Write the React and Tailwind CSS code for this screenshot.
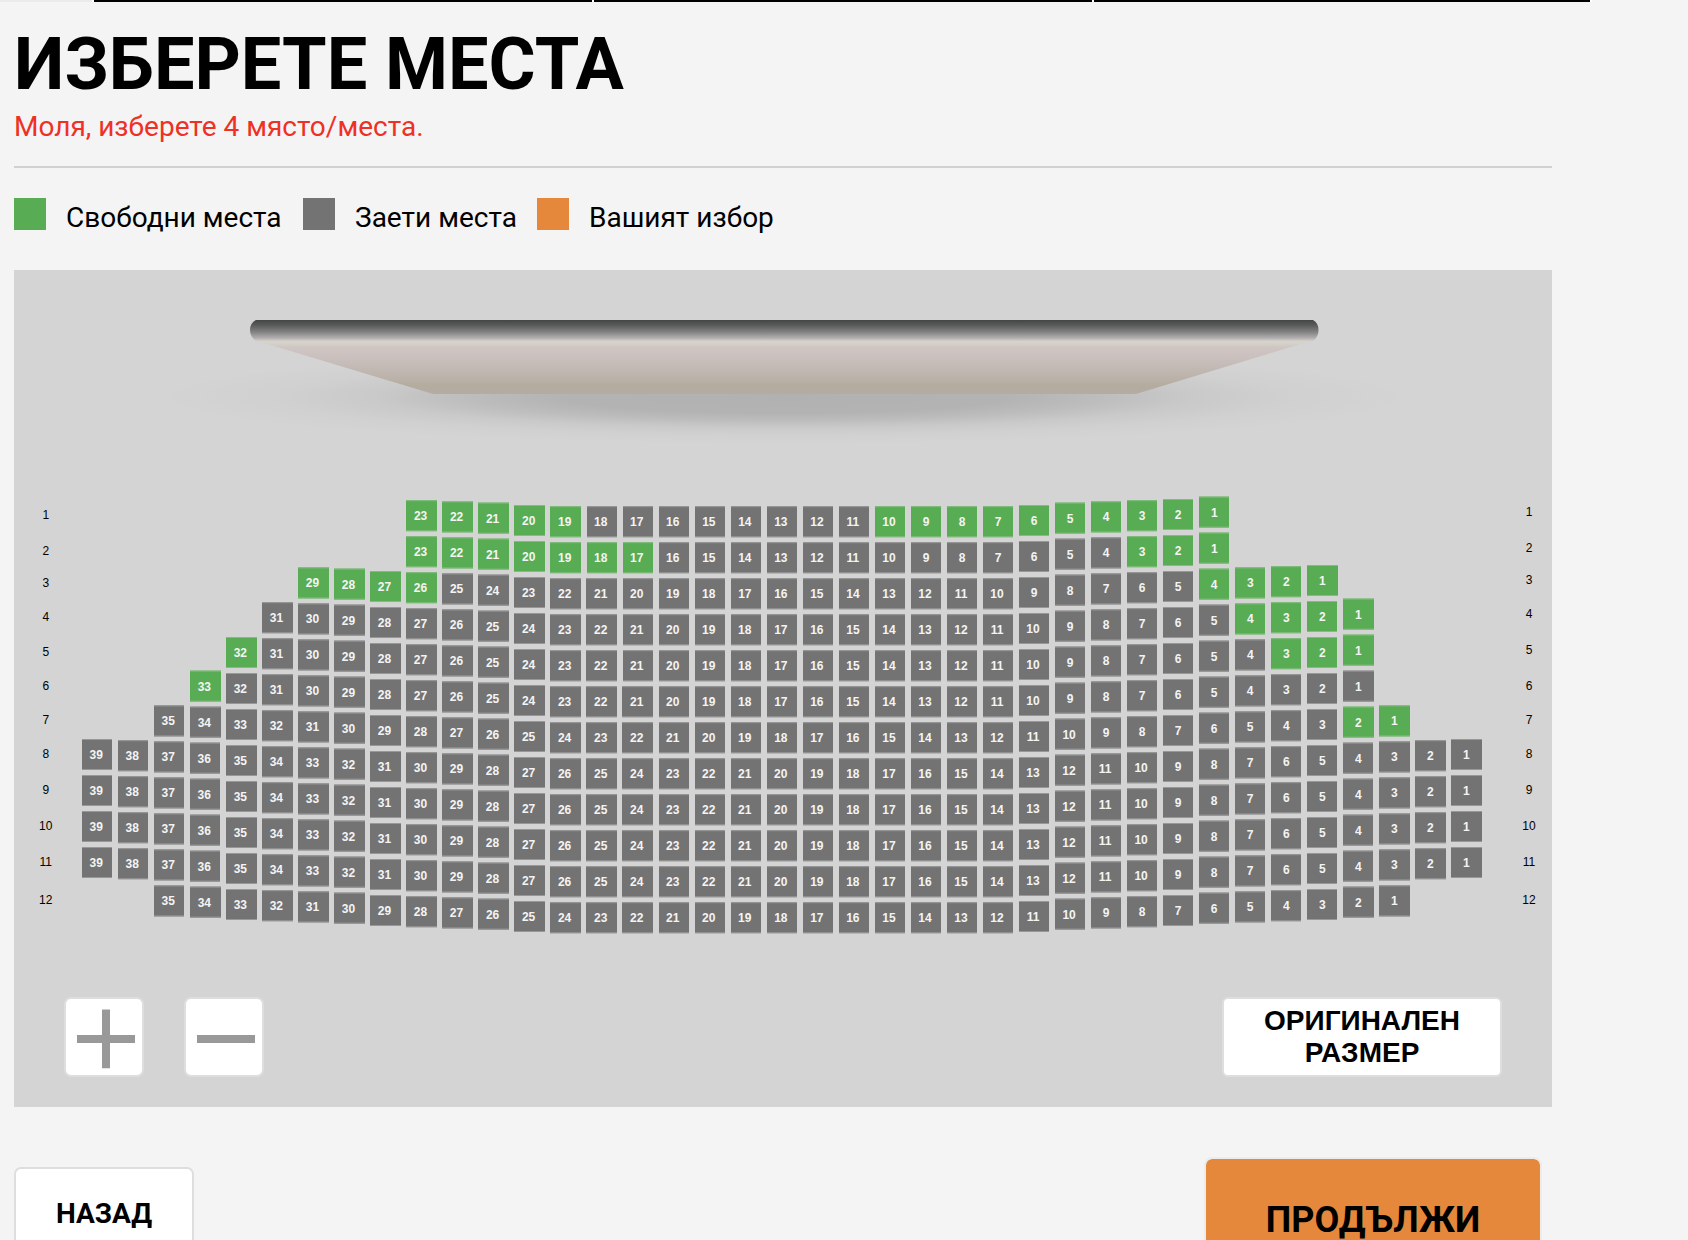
const FIRST_COLUMN_TOP = [0, 1.2, 2.4, 3.6];
const LAST_COLUMN = 38;

// The hall is curved: columns sink towards the middle in groups of four.
function columnDrop(column) {
  const i = Math.min(column, LAST_COLUMN - column, 13);
  return Math.floor(i / 4) * 6 + FIRST_COLUMN_TOP[i % 4];
}

const ROWS = [
  { row: 1, start: 9, count: 23, free: [[19, 23], [1, 10]], left: 515.3, right: 512 },
  { row: 2, start: 9, count: 23, free: [[17, 23], [1, 3]], left: 551.3, right: 548 },
  { row: 3, start: 6, count: 29, free: [[26, 29], [1, 4]], left: 582.7, right: 580.3 },
  { row: 4, start: 5, count: 31, free: [[1, 4]], left: 617.3, right: 614 },
  { row: 5, start: 4, count: 32, free: [[32, 32], [1, 3]], left: 652, right: 650 },
  { row: 6, start: 3, count: 33, free: [[33, 33]], left: 685.7, right: 686 },
  { row: 7, start: 2, count: 35, free: [[1, 2]], left: 720.3, right: 720.3 },
  { row: 8, start: 0, count: 39, free: [], left: 754, right: 754 },
  { row: 9, start: 0, count: 39, free: [], left: 790, right: 790 },
  { row: 10, start: 0, count: 39, free: [], left: 826, right: 826 },
  { row: 11, start: 0, count: 39, free: [], left: 862, right: 862 },
  { row: 12, start: 2, count: 35, free: [], left: 900.3, right: 900.3 },
];

const LEGEND = [
  { label: "Свободни места", color: "bg-[#58ac53]", width: "w-[289px]" },
  { label: "Заети места", color: "bg-[#737373]", width: "w-[234px]" },
  { label: "Вашият избор", color: "bg-[#e5883b]", width: "w-[260px]" },
];

function Seat({ number, free, drop }) {
  return (
    <div className="h-9 w-[36.04px] shrink-0">
      <div
        className={`flex h-[31px] w-[30.4px] items-center justify-center border-y text-[12px] leading-none font-bold text-[#f4f4f4] ${
          free ? "border-[#82bd7e] bg-[#58ac53]" : "border-[#989898] bg-[#737373]"
        } ${number > 9 ? "pr-[2px]" : ""}`}
        style={{ transform: `translateY(${drop}px)` }}
      >
        {number}
      </div>
    </div>
  );
}

function SeatRow({ row, start, count, free, left, right }) {
  const rowTop = 487 + (row - 1) * 36;
  return (
    <div className="flex h-9">
      <div className="w-[68px] shrink-0 pr-[4.5px] text-center text-[12px] leading-[12px] text-black">
        <div style={{ transform: `translateY(${left - rowTop - 6}px)` }}>{row}</div>
      </div>
      <div className="flex w-[1406px] shrink-0">
        <div className="shrink-0" style={{ width: start * 36.04 }} />
        {Array.from({ length: count }, (_, i) => {
          const number = count - i;
          return (
            <Seat
              key={number}
              number={number}
              free={free.some(([a, b]) => number >= a && number <= b)}
              drop={columnDrop(start + i)}
            />
          );
        })}
      </div>
      <div className="w-[64px] shrink-0 pl-[18px] text-center text-[12px] leading-[12px] text-black">
        <div style={{ transform: `translateY(${right - rowTop - 6}px)` }}>{row}</div>
      </div>
    </div>
  );
}

function CinemaScreen() {
  return (
    <svg className="block h-[217px] w-[1538px]" viewBox="14 270 1538 217">
      <defs>
        <linearGradient id="bar" x1="0" y1="0" x2="0" y2="1">
          <stop offset="0" stopColor="#444646" />
          <stop offset="0.25" stopColor="#595a5a" />
          <stop offset="0.6" stopColor="#878686" />
          <stop offset="0.85" stopColor="#b0adad" />
          <stop offset="1" stopColor="#d4cfca" />
        </linearGradient>
        <linearGradient id="slope" x1="0" y1="0" x2="0" y2="1">
          <stop offset="0" stopColor="#d8d5cc" />
          <stop offset="0.06" stopColor="#d5d1c9" />
          <stop offset="0.13" stopColor="#cfc6c3" />
          <stop offset="0.35" stopColor="#c9bfbd" />
          <stop offset="0.6" stopColor="#bfb6b0" />
          <stop offset="0.85" stopColor="#b5aca0" />
          <stop offset="1" stopColor="#b3aca3" />
        </linearGradient>
        <radialGradient id="shade">
          <stop offset="0" stopColor="#000" stopOpacity="0.165" />
          <stop offset="0.35" stopColor="#000" stopOpacity="0.155" />
          <stop offset="0.5" stopColor="#000" stopOpacity="0.11" />
          <stop offset="0.65" stopColor="#000" stopOpacity="0.05" />
          <stop offset="0.8" stopColor="#000" stopOpacity="0.018" />
          <stop offset="1" stopColor="#000" stopOpacity="0" />
        </radialGradient>
      </defs>
      <ellipse cx="784" cy="397" rx="630" ry="47" fill="url(#shade)" />
      <path d="M254 340H1314L1136 394H433Z" fill="url(#slope)" />
      <path d="M256 320H1313Q1318.500 323 1318.500 330Q1318.500 337 1313 341H256Q250 337 250 330Q250 323 256 320Z" fill="url(#bar)" />
    </svg>
  );
}

export default function App() {
  return (
    <div className="h-[1240px] w-[1688px] overflow-hidden bg-[#f4f4f4] font-['Roboto',sans-serif] text-black">
      <div className="flex h-[2px] w-[1592px] gap-[2px] bg-white">
        <div className="w-[92px] bg-[#ebebeb]" />
        <div className="w-[498px] bg-black" />
        <div className="w-[498px] bg-black" />
        <div className="w-[496px] bg-black" />
      </div>
      <main className="ml-[14px] w-[1538px]">
        <h1 className="h-[104px] pt-5 text-[72px] leading-[86px] font-bold whitespace-nowrap">ИЗБЕРЕТЕ МЕСТА</h1>
        <p className="h-[60px] pt-[4px] text-[28px] leading-[33px] text-[#ee3124]">Моля, изберете 4 място/места.</p>
        <hr className="h-[2px] border-0 bg-[#d1d1d1]" />
        <div className="flex h-[102px] pt-[30px]">
          {LEGEND.map(({ label, color, width }) => (
            <div key={label} className={`flex gap-[20px] ${width}`}>
              <span className={`size-8 shrink-0 ${color}`} />
              <span className="pt-[3px] text-[28px] leading-[33px] whitespace-nowrap">{label}</span>
            </div>
          ))}
        </div>
        <section className="h-[837px] bg-[#d4d4d4] font-['Liberation_Sans',Arial,sans-serif]">
          <CinemaScreen />
          <div className="h-[510px]">
            {ROWS.map((r) => (
              <SeatRow key={r.row} {...r} />
            ))}
          </div>
          <div className="flex h-20 pl-[50px]">
            <button className="flex h-20 w-20 items-center justify-center rounded-[7px] border-2 border-[#dedede] bg-white">
              <svg className="size-[76px] text-[#999]" viewBox="66 999 76 76" fill="currentColor">
                <path d="M77 1035h25v-25.500h8v25.500h25v8h-25v25.200h-8v-25.200h-25z" />
              </svg>
            </button>
            <button className="ml-10 flex h-20 w-20 items-center justify-center rounded-[7px] border-2 border-[#dedede] bg-white">
              <svg className="size-[76px] text-[#999]" viewBox="186 999 76 76" fill="currentColor">
                <path d="M197 1035h58v8h-58z" />
              </svg>
            </button>
            <button className="ml-[958px] h-20 w-[280px] rounded-[6px] border-2 border-[#dedede] bg-white px-8 pb-[1px] text-[28px] leading-[32px] font-bold">
              ОРИГИНАЛЕН РАЗМЕР
            </button>
          </div>
        </section>
        <div className="flex justify-between pt-[50px]">
          <button className="mt-[10px] h-[96px] w-[180px] rounded-[7px] border-2 border-[#dedede] bg-white pb-[2px] text-[28px] font-bold">
            НАЗАД
          </button>
          <button className="mr-[10px] h-[125px] w-[338px] rounded-[8px] border-2 border-[#ececec] bg-[#e5883b] bg-clip-padding text-[36px] font-bold">
            ПРОДЪЛЖИ
          </button>
        </div>
      </main>
    </div>
  );
}
